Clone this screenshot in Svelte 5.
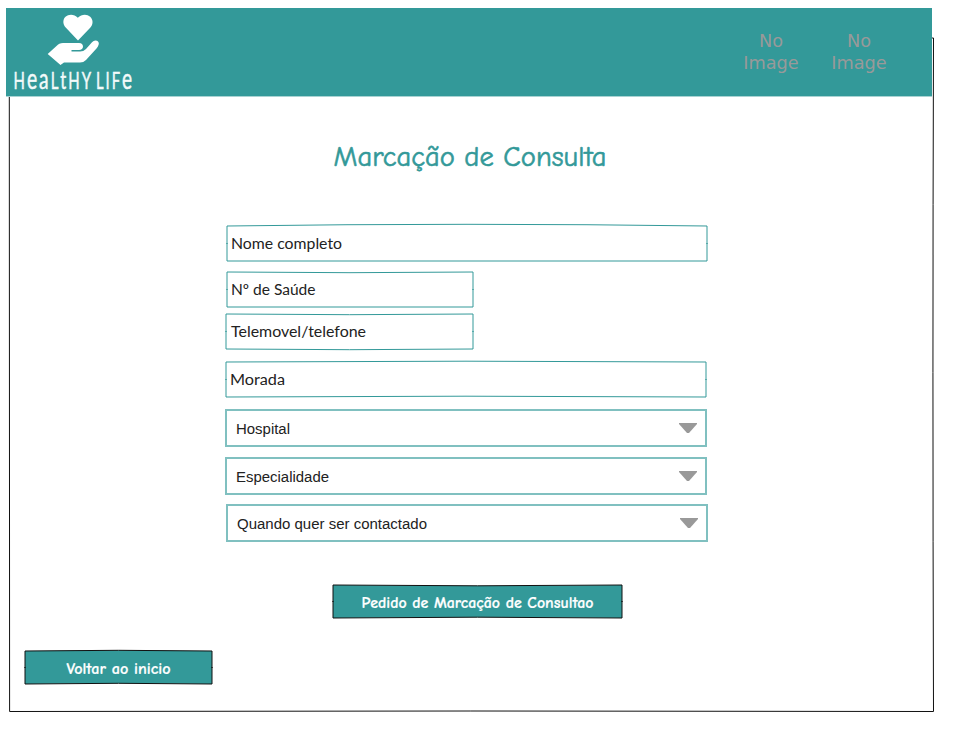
<script>
  const teal = '#339999';
  const inputs = [
    { label: 'Nome completo', x: 1, w: 480, h: 35, gap: 11, tx: 4, tw: 111, top: -1.7, bottom: 0 },
    { label: 'Nº de Saúde', x: 1, w: 246, h: 35, gap: 7, tx: 4, tw: 84.5, top: 0.7, bottom: 0 },
    { label: 'Telemovel/telefone', x: 0, w: 247, h: 35, gap: 13, tx: 5, tw: 135, top: 0.7, bottom: 0.7 },
    { label: 'Morada', x: 0, w: 480, h: 35, gap: 12, tx: 4, tw: 55, top: -0.8, bottom: -0.8 }
  ];
  const selects = [
    { label: 'Hospital', x: 0, gap: 10, tw: 54 },
    { label: 'Especialidade', x: 0, gap: 9, tw: 93 },
    { label: 'Quando quer ser contactado', x: 1, gap: 0, tw: 190 }
  ];
</script>

{#snippet sketch(w, h, top, bottom, stroke, fill)}
  <path
    d="M0 0Q{w / 2} {top * 2} {w} 0V{h}Q{w / 2} {h + bottom * 2} 0 {h}Z"
    {fill}
    {stroke}
  />
  <path d="M-1 {h / 2}H1M{w - 1} {h / 2}H{w + 1}" {stroke} opacity=".65" />
{/snippet}

<main>
  <svg class="frame" width="953" height="746" aria-hidden="true">
    <path d="M9.3 90L9.6 711.5Q470 710.5 933.5 711.5Q932.4 370 933.5 38H931" fill="none" stroke="#111" />
  </svg>

  <header>
    <svg class="brand" width="140" height="89" viewBox="6 8 140 89">
      <path fill="#fff" d="M78 40.5L65.7 27.5C62.6 24.2 62.7 19.5 65.5 16.8C68.8 13.7 74.5 14 77.8 17.8C81.5 14 87 13.8 90.2 16.8C93.5 20 93.2 24.7 90.2 27.8Z" />
      <path fill="#fff" d="M47.7 54L56.5 46Q59 43 63 43H79Q83 43.3 83 46.7Q82.8 49.7 79 50H71.5V51.6H80Q83.5 51.6 86 49L92 42.3Q94.2 39.6 97 40.7Q99.5 42 98.6 44.8Q98 46.7 96.5 48.5L86 60Q83.5 62.5 80 62.5H64L60.5 65Z" />
      <text x="13.5" y="88.8" textLength="79.5" lengthAdjust="spacingAndGlyphs">H<tspan class="round">ea</tspan>L<tspan class="tee">t</tspan>HY</text>
      <text x="96" y="88.8" textLength="38" lengthAdjust="spacingAndGlyphs">LIF<tspan class="round">e</tspan></text>
    </svg>
    <div class="pictures">
      <span>No<br />Image</span>
      <span>No<br />Image</span>
    </div>
  </header>

  <h1>
    <svg width="280" height="44">
      <text x="3.5" y="30" font-size="28" textLength="273" lengthAdjust="spacingAndGlyphs">Marcação de Consulta</text>
    </svg>
  </h1>

  <form>
    {#each inputs as f}
      <svg class="input" width={f.w} height={f.h} style:margin-left="{f.x}px" style:margin-bottom="{f.gap}px">
        {@render sketch(f.w, f.h, f.top, f.bottom, teal, 'none')}
        <text x={f.tx} y="22.5" font-size="15.5" textLength={f.tw} lengthAdjust="spacingAndGlyphs">{f.label}</text>
      </svg>
    {/each}
    {#each selects as s}
      <div class="select" style:margin-left="{s.x - 1}px" style:margin-bottom="{s.gap}px">
        <svg width="220" height="34">
          <text x="9" y="23" font-size="14.7" textLength={s.tw} lengthAdjust="spacingAndGlyphs">{s.label}</text>
        </svg>
        <svg width="18" height="10"><path d="M0 0H18V1L10 10H8L0 1Z" fill="#999" /></svg>
      </div>
    {/each}
  </form>

  <svg class="button request" width="289" height="33">
    {@render sketch(289, 33, 0.8, -0.8, '#111', teal)}
    <text x="28.5" y="23" textLength="232" lengthAdjust="spacingAndGlyphs">Pedido de Marcação de Consultao</text>
  </svg>
  <svg class="button back" width="187" height="33">
    {@render sketch(187, 33, -0.7, -0.7, '#111', teal)}
    <text x="41.5" y="23" textLength="104" lengthAdjust="spacingAndGlyphs">Voltar ao inicio</text>
  </svg>
</main>

<style>
  :global(body) { background: #fff; }
  main {
    position: relative;
    box-sizing: border-box;
    width: 953px;
    height: 746px;
    padding: 8px 0 0 6px;
    overflow: hidden;
    display: flex;
    flex-direction: column;
    align-items: flex-start;
    font-family: Lato, sans-serif;
  }
  svg { display: block; overflow: visible; flex: none; }
  .frame { position: absolute; left: 0; top: 0; }
  header {
    position: relative;
    display: flex;
    justify-content: space-between;
    width: 926px;
    height: 88px;
    background: #339999;
    box-shadow: 0 1px #a9d3d3;
  }
  .brand text {
    font-size: 22.5px;
    letter-spacing: 3px;
    fill: #f3fafa;
    stroke: #f3fafa;
    stroke-width: 0.5;
  }
  .round { font-size: 29px; }
  .tee { font-size: 25px; }
  .pictures {
    display: flex;
    gap: 28px;
    padding: 22px 43px 0 0;
    font: 17.7px/22px "DejaVu Sans", sans-serif;
    color: #999;
    text-align: center;
  }
  .pictures span { width: 60px; }
  h1 { margin: 40px 0 0 324px; font-weight: 400; }
  h1 text {
    font-family: "Comic Sans MS", "Comic Neue", Lato, sans-serif;
    fill: #339999;
    stroke: #339999;
    stroke-width: 0.6;
  }
  form { margin: 46px 0 0 220px; }
  .input text { fill: #222; }
  .select {
    box-sizing: border-box;
    width: 482px;
    height: 38px;
    border: 2px solid #80c0c0;
    display: flex;
    align-items: center;
    justify-content: space-between;
    padding-right: 8px;
    font-family: "Liberation Sans", sans-serif;
  }
  .select text { fill: #222; }
  .button text {
    font-family: "Comic Sans MS", "Comic Neue", Lato, sans-serif;
    font-size: 15px;
    font-weight: 700;
    fill: #fff;
    stroke: #fff;
    stroke-width: 0.2;
  }
  .request { margin: 43px 0 0 327px; }
  .back { margin: 33px 0 0 19px; }
</style>
